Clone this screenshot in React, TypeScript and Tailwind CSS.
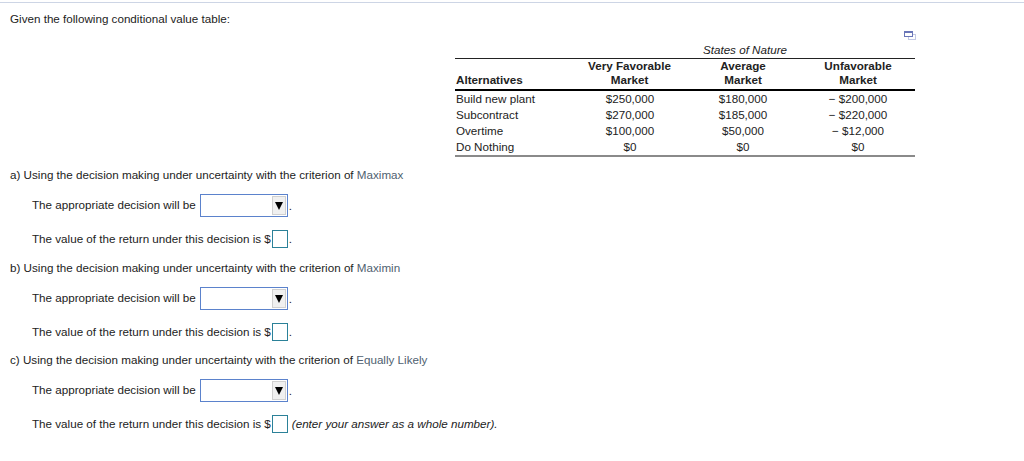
const rows = [
  ["Build new plant", "$250,000", "$180,000", "\u2212\u00a0$200,000"],
  ["Subcontract", "$270,000", "$185,000", "\u2212\u00a0$220,000"],
  ["Overtime", "$100,000", "$50,000", "\u2212\u00a0$12,000"],
  ["Do Nothing", "$0", "$0", "$0"],
];

function DecisionSelect() {
  return (
    <span className="ml-[4px] mr-[1px] inline-flex h-[23px] w-[88px] items-center justify-end border border-[#5b82cc] bg-white pr-[1px]">
      <span className="flex h-[19px] w-[14px] items-center justify-center border border-[#d0d0d0] bg-[#f0f0f0]">
        <span className="h-0 w-0 border-x-[4px] border-t-[8px] border-x-transparent border-t-black" />
      </span>
    </span>
  );
}

function ValueInput() {
  return <span className="mx-[1px] inline-block h-[18px] w-[16px] border border-[#2b8198] bg-white" />;
}

function Part({ label, term, last, className }: { label: string; term: string; last?: boolean; className?: string }) {
  return (
    <section className={`flex flex-col ${className ?? ""}`}>
      <p className="h-[16px] pl-[10px] leading-[16px]">
        {label} Using the decision making under uncertainty with the criterion of{" "}
        <span className="text-[#4f5f70]">{term}</span>
      </p>
      <div className="mt-[11px] flex h-[23px] items-center pl-[32px]">
        <span className="pb-[2px]">The appropriate decision will be</span>
        <DecisionSelect />.
      </div>
      <div className="mt-[13px] flex h-[18px] items-center pl-[32px]">
        The value of the return under this decision is $
        <ValueInput />
        {last ? <em className="ml-[3px]">(enter your answer as a whole number).</em> : "."}
      </div>
    </section>
  );
}

export default function App() {
  return (
    <div className="h-[461px] w-[1024px] overflow-hidden bg-white font-['Liberation_Sans',Arial,sans-serif] text-[11.65px] text-[#222]">
      <div className="mt-[2px] h-[1px] bg-[#cdd5e5]" />
      <p className="mt-[8px] h-[16px] pl-[10px] leading-[16px]">Given the following conditional value table:</p>

      <div className="relative ml-[455px] mt-[15px] w-[460px]">
        <svg className="absolute right-[-2px] top-[-11px]" width="13" height="9" viewBox="0 0 13 9" fill="none">
          <rect x="4.5" y="3.5" width="7" height="5" stroke="#c3c9e4" />
          <rect x="0.5" y="0.5" width="8" height="5" fill="#fff" stroke="#6a76b8" />
          <rect x="0" y="0" width="9" height="2" fill="#6a76b8" />
        </svg>
        <div className="ml-[120px] h-[16px] text-center italic leading-[16px]">States of Nature</div>
        <div className="grid grid-cols-[120px_110px_116px_114px] border-t border-b-2 border-t-[#222] border-b-black pb-[2px] font-bold leading-[14px]">
          <div className="self-end pl-[1px]">Alternatives</div>
          <div className="pr-[1px] text-center">Very Favorable<br />Market</div>
          <div className="text-center">Average<br />Market</div>
          <div className="text-center">Unfavorable<br />Market</div>
        </div>
        <div className="border-b-2 border-b-[#8a8a8a]">
          {rows.map((row) => (
            <div key={row[0]} className="grid h-[16px] grid-cols-[120px_110px_116px_114px] leading-[16px]">
              {row.map((cell, i) => (
                <div key={i} className={i === 0 ? "pl-[1px]" : "text-center"}>{cell}</div>
              ))}
            </div>
          ))}
        </div>
      </div>

      <div className="mt-[10px] flex flex-col gap-[11px]">
        <Part label="a)" term="Maximax" className="mb-[1px]" />
        <Part label="b)" term="Maximin" />
        <Part label="c)" term="Equally Likely" last />
      </div>
    </div>
  );
}
